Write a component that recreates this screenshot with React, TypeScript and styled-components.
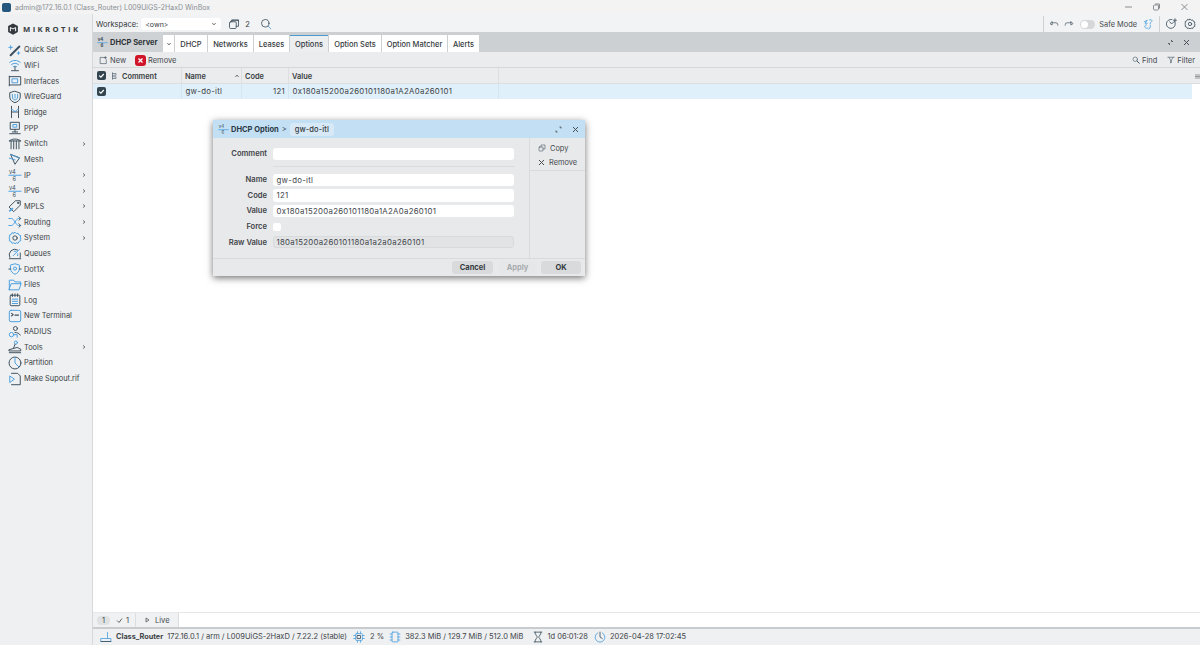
import React from "react";
import styled, { createGlobalStyle } from "styled-components";

const Global = createGlobalStyle`
  html, body { margin: 0; padding: 0; background: #fff; }
  body { font-family: Inter, "Liberation Sans", sans-serif; font-size: 7.5px; color: #33383c; }
  * { box-sizing: border-box; }
`;

const DARK = "#3d4f5c";
const BLUE = "#4a9fe0";

const Page = styled.div`
  width: 1200px;
  height: 645px;
  position: relative;
  overflow: hidden;
  display: flex;
  flex-direction: column;
`;

const TitleBar = styled.div`
  height: 14px;
  flex: none;
  display: flex;
  align-items: center;
  padding-left: 2px;
  gap: 4px;
  background: #f3f3f3;
  color: #8a8f94;
  font-size: 7px;
`;

const AppGlyph = styled.span`
  width: 9px;
  height: 9px;
  border-radius: 2px;
  background: #24567e;
  flex: none;
`;

const TitleText = styled.span`
  flex: 1;
  white-space: nowrap;
`;

const WindowControls = styled.div`
  display: flex;
  align-items: center;
  gap: 21px;
  padding-right: 12px;
`;

const Body = styled.div`
  flex: 1;
  display: flex;
  min-height: 0;
`;

const Sidebar = styled.nav`
  width: 93px;
  flex: none;
  background: #eef0f2;
  border-right: 1px solid #d6d8da;
  padding-top: 6px;
`;

const Logo = styled.div`
  height: 17px;
  display: flex;
  align-items: center;
  gap: 4px;
  padding-left: 7px;
  margin-bottom: 5px;
`;

const LogoText = styled.span`
  font-family: "Open Sans", sans-serif;
  font-weight: 700;
  font-size: 7.7px;
  letter-spacing: 2.4px;
  color: #3a3f44;
`;

const NavItem = styled.div`
  height: 15.67px;
  display: flex;
  align-items: center;
  padding-left: 8px;
  gap: 2px;
  font-size: 7.4px;
  color: #3c4246;
  white-space: nowrap;
`;

const NavLabel = styled.span`
  flex: 1;
`;

const NavArrow = styled.span`
  width: 5px;
  margin-right: 6px;
  display: flex;
`;

const Main = styled.div`
  flex: 1;
  min-width: 0;
  display: flex;
  flex-direction: column;
`;

const TopBar = styled.div`
  height: 18px;
  flex: none;
  display: flex;
  align-items: center;
  background: #f2f3f4;
  padding: 2px 0 0 3px;
  font-size: 7.5px;
`;

const WorkspaceSelect = styled.div`
  width: 80px;
  height: 12px;
  margin-left: 3px;
  background: #fff;
  border-radius: 3px;
  display: flex;
  align-items: center;
  justify-content: space-between;
  padding: 0 4px;
  font-size: 7px;
`;

const TopIcons = styled.div`
  display: flex;
  align-items: center;
  gap: 5px;
  margin-left: 7px;
`;

const SearchSlot = styled.div`
  display: flex;
  margin-left: 10px;
`;

const TopRight = styled.div`
  margin-left: auto;
  height: 16px;
  display: flex;
  align-items: center;
  border-left: 1px solid #cfd1d3;
  padding-left: 5px;
`;

const SafeGroup = styled.div`
  display: flex;
  align-items: center;
  gap: 5px;
  padding-right: 5px;
  border-right: 1px solid #cfd1d3;
  height: 16px;
  font-size: 7.4px;
  color: #44494d;
`;

const Toggle = styled.span`
  width: 15px;
  height: 9px;
  border-radius: 5px;
  background: #d5d7d9;
  display: flex;
  align-items: center;
  padding-left: 1px;
  margin: 0 -1px 0 1px;
  &::before {
    content: "";
    width: 7px;
    height: 7px;
    border-radius: 50%;
    background: #fff;
  }
`;

const GearGroup = styled.div`
  display: flex;
  gap: 6px;
  padding: 0 4px 0 6px;
`;

const TabBar = styled.div`
  height: 20px;
  flex: none;
  display: flex;
  align-items: stretch;
  background: #ccd0d2;
  padding-top: 3px;
`;

const WindowTab = styled.div`
  width: 70px;
  margin-top: -3px;
  display: flex;
  align-items: center;
  gap: 2px;
  padding-left: 4px;
  font-weight: 700;
  font-size: 7.5px;
  background: #ced2d4;
  color: #2e3438;
  white-space: nowrap;
`;

const Tab = styled.div<{ $active?: boolean; $w: number }>`
  width: ${(p) => p.$w}px;
  margin-right: 1px;
  display: flex;
  align-items: center;
  justify-content: center;
  font-size: 7.5px;
  font-weight: 500;
  background: ${(p) => (p.$active ? "#eceef0" : "#fff")};
  color: #353a3e;
  border-top: 1px solid ${(p) => (p.$active ? "#4b9ad0" : "#fff")};
  white-space: nowrap;
`;

const TabActions = styled.div`
  margin-left: auto;
  display: flex;
  align-items: center;
  gap: 9px;
  padding: 0 10px 3px 0;
`;

const Toolbar = styled.div`
  height: 16px;
  flex: none;
  display: flex;
  align-items: center;
  background: #ebecee;
  border-bottom: 1px solid #d5d7d9;
  padding: 1px 0 0 6px;
  gap: 9px;
  font-size: 7.5px;
`;

const ToolButton = styled.span`
  display: flex;
  align-items: center;
  gap: 2px;
  color: #44494d;
`;

const ToolSpacer = styled.div`
  flex: 1;
`;

const ToolRight = styled.div`
  display: flex;
  align-items: center;
  gap: 10px;
  padding-right: 5px;
`;

const COLS = "15px 74px 60px 47px 210px 1fr";

const HeaderRow = styled.div`
  height: 16px;
  flex: none;
  display: grid;
  grid-template-columns: ${COLS};
  background: #ebecee;
  border-bottom: 1px solid #dcdee0;
  font-weight: 600;
  font-size: 7.4px;
  color: #3a3f43;
`;

const HeaderCell = styled.div`
  display: flex;
  align-items: center;
  gap: 3px;
  padding: 1px 0 0 3px;
  border-right: 1px solid #dcdee0;
  justify-content: space-between;
  &:last-child {
    border-right: none;
    justify-content: flex-end;
  }
`;

const CellLabel = styled.span`
  display: flex;
  align-items: center;
  gap: 3px;
  margin-right: auto;
`;

const CheckCell = styled.div`
  display: flex;
  align-items: center;
  justify-content: center;
  padding-left: 1px;
`;

const Check = styled.span`
  width: 9px;
  height: 9px;
  background: #33454f;
  border-radius: 2px;
  display: flex;
`;

const DataRow = styled.div`
  height: 14.5px;
  flex: none;
  width: 1099px;
  display: grid;
  grid-template-columns: ${COLS};
  background: #e0f0fa;
  font-size: 7.8px;
  color: #3d4246;
  letter-spacing: 0.3px;
`;

const DataCell = styled.div<{ $right?: boolean }>`
  display: flex;
  align-items: center;
  padding: 0 3px 0 ${(p) => (p.$right ? 3 : 3.5)}px;
  justify-content: ${(p) => (p.$right ? "flex-end" : "flex-start")};
  border-right: 1px solid #d6e6f0;
  &:last-child {
    border-right: none;
  }
`;

const Content = styled.div`
  flex: 1;
  background: #fff;
`;

const LiveBar = styled.div`
  height: 15px;
  flex: none;
  display: flex;
  align-items: center;
  background: #fff;
  border-top: 1px solid #e6e7e8;
  font-size: 7.5px;
  color: #44494d;
`;

const LiveStats = styled.div`
  height: 100%;
  width: 42px;
  display: flex;
  align-items: center;
  background: #f0f1f2;
  padding-left: 4px;
  gap: 3px;
`;

const CountBadge = styled.span`
  width: 13px;
  height: 9px;
  background: #dfe1e3;
  border-radius: 4px;
  text-align: center;
  line-height: 9px;
  margin-right: 3px;
`;

const LivePlay = styled.div`
  height: 100%;
  display: flex;
  align-items: center;
  gap: 5px;
  background: #f0f1f2;
  border-left: 1px solid #dcdee0;
  border-right: 1px solid #dcdee0;
  padding: 0 8px 0 9px;
`;

const StatusBar = styled.div`
  height: 18px;
  flex: none;
  display: flex;
  align-items: center;
  background: #eef0f2;
  border-top: 2px solid #c9cccf;
  padding: 0 0 1px 7px;
  font-size: 7.5px;
  color: #3f4448;
  white-space: nowrap;
`;

const StatusItem = styled.span<{ $gap?: number; $iconGap?: number }>`
  display: flex;
  align-items: center;
  gap: ${(p) => p.$iconGap ?? 4}px;
  margin-right: ${(p) => p.$gap ?? 6}px;
`;

const RouterName = styled.b`
  font-weight: 700;
  font-size: 7.3px;
`;

const Dialog = styled.div`
  position: absolute;
  left: 213px;
  top: 120px;
  width: 372px;
  height: 156px;
  background: #e8e9eb;
  box-shadow: 0 2px 7px rgba(0, 0, 0, 0.55);
  display: flex;
  flex-direction: column;
`;

const DialogTitle = styled.div`
  height: 18px;
  flex: none;
  background: #c3dff3;
  display: flex;
  align-items: center;
  padding-left: 5px;
  gap: 2px;
  font-size: 7.5px;
`;

const DialogName = styled.b`
  font-weight: 700;
  color: #2b3a46;
`;

const Crumb = styled.span`
  color: #44515c;
  margin: 0 1px;
`;

const Pill = styled.span`
  height: 13px;
  padding: 0 5px;
  background: #d7e9f6;
  border-radius: 3px;
  display: flex;
  align-items: center;
  font-weight: 500;
  letter-spacing: 0.1px;
`;

const DialogClose = styled.div`
  margin-left: auto;
  display: flex;
  gap: 10px;
  padding-right: 6px;
`;

const DialogMain = styled.div`
  flex: 1;
  display: flex;
  min-height: 0;
`;

const Form = styled.div`
  width: 317px;
  flex: none;
  border-right: 1px solid #d8dadc;
  padding-top: 8px;
`;

const FieldRow = styled.div`
  height: 15.6px;
  display: grid;
  grid-template-columns: 54px 241px;
  column-gap: 6px;
  align-items: center;
`;

const FieldLabel = styled.label`
  text-align: right;
  font-weight: 600;
  font-size: 7.6px;
  color: #3f4448;
`;

const Field = styled.div<{ $disabled?: boolean }>`
  height: 12.5px;
  background: ${(p) => (p.$disabled ? "#e2e3e5" : "#fff")};
  border: ${(p) => (p.$disabled ? "1px solid #d8dadc" : "none")};
  border-radius: 3px;
  display: flex;
  align-items: center;
  padding: 0 ${(p) => (p.$disabled ? 2.5 : 3.5)}px;
  font-size: 7.8px;
  letter-spacing: 0.3px;
  color: #40454a;
`;

const CheckBox = styled.span`
  width: 8px;
  height: 8px;
  background: #fff;
  border-radius: 2px;
  display: block;
`;

const Divider = styled.div`
  height: 1px;
  background: #dadcde;
  margin: 4px 14px 5.4px 60px;
`;

const SideActions = styled.div`
  flex: 1;
  height: 33px;
  border-bottom: 1px solid #d8dadc;
  padding: 3px 0 0 8px;
  font-size: 7.4px;
  color: #44494d;
`;

const SideAction = styled.div`
  height: 14px;
  display: flex;
  align-items: center;
  gap: 4px;
`;

const DialogFooter = styled.div`
  height: 18px;
  flex: none;
  border-top: 1px solid #d8dadc;
  display: flex;
  align-items: center;
  justify-content: flex-end;
  padding-right: 4px;
  gap: 5px;
`;

const FootButton = styled.div<{ $w: number; $disabled?: boolean; $gapLeft?: number }>`
  width: ${(p) => p.$w}px;
  height: 13px;
  border-radius: 3px;
  background: ${(p) => (p.$disabled ? "#e6e7e9" : "#d8dadc")};
  color: ${(p) => (p.$disabled ? "#a8abae" : "#33383c")};
  font-weight: 700;
  font-size: 7.5px;
  display: flex;
  align-items: center;
  justify-content: center;
  margin-left: ${(p) => p.$gapLeft ?? 0}px;
`;

type IconProps = { size?: number; children: React.ReactNode };
const Ico = ({ size = 14, children }: IconProps) => (
  <svg
    width={size}
    height={size}
    viewBox="0 0 16 16"
    fill="none"
    stroke={DARK}
    strokeWidth={1.1}
    strokeLinecap="round"
    strokeLinejoin="round"
    style={{ flex: "none" }}
  >
    {children}
  </svg>
);

const Ip = ({ size = 13 }: { size?: number }) => (
  <Ico size={size}>
    <text x="1" y="6.5" fontSize="6.5" fill={DARK} stroke="none" fontFamily="Inter">v4</text>
    <path d="M1 8.3h14" stroke={BLUE} />
    <text x="5" y="15" fontSize="6.5" fill={DARK} stroke="none" fontFamily="Inter">6</text>
  </Ico>
);

const GEAR = "M8 1.5 9.5 3l2-.5 1 2 2 .8-.5 2L15 8l-1 1.2.5 2-2 .8-1 2-2-.5L8 14.5 6.5 13.5l-2 .5-1-2-2-.8.5-2L1 8l1-1.2-.5-2 2-.8 1-2 2 .5z";

const navIcons: Record<string, React.ReactNode> = {
  "Quick Set": (
    <Ico>
      <path d="M3 14 13 4" strokeWidth={2.2} />
      <path d="M3 3v4M1 5h4" stroke={BLUE} />
      <path d="M12 10v3M10.5 11.5h3" stroke={BLUE} />
    </Ico>
  ),
  WiFi: (
    <Ico>
      <path d="M2 5c3.5-3 8.5-3 12 0M4 7.5c2.5-2 5.5-2 8 0M6 10c1.2-.8 2.8-.8 4 0" stroke={BLUE} />
      <path d="M8 10v4M4 14.5h8" />
    </Ico>
  ),
  Interfaces: (
    <Ico>
      <path d="M1.5 2.5v11M1.5 3h13v9.5h-13" />
      <rect x="5" y="5.5" width="6" height="4.5" stroke={BLUE} />
    </Ico>
  ),
  WireGuard: (
    <Ico>
      <path d="M8 1.5 14 3.5V8c0 3.5-3 5.5-6 6.5-3-1-6-3-6-6.5V3.5z" />
      <path d="M5 5v3c0 2 1.500 3 3 3.500 1.500-.5 3-1.500 3-3.500V5M8 5v4" stroke={BLUE} />
    </Ico>
  ),
  Bridge: (
    <Ico>
      <path d="M4 1.5v13M12 1.5v13M4 8h8" />
      <path d="M4 5c2 0 3 1.5 4 3 1-1.5 2-3 4-3" stroke={BLUE} />
    </Ico>
  ),
  PPP: (
    <Ico>
      <rect x="3" y="1.5" width="10" height="8" />
      <path d="M8 9.5v3M2 14.5h12M5 12.5h6" />
      <path d="M6 4h4v3H6z" stroke={BLUE} />
    </Ico>
  ),
  Switch: (
    <Ico>
      <path d="M1.5 4.5c3-3 10-3 13 0M1.5 4.5h13" />
      <path d="M3.5 4.5v9M6.5 4.5v9M9.5 4.5v9M12.5 4.5v9" />
    </Ico>
  ),
  Mesh: (
    <Ico>
      <path d="M3 3 8 14 13 7z" />
      <path d="M3 3 13 7M1.5 7 8 9" stroke={BLUE} />
    </Ico>
  ),
  IP: <Ip size={14} />,
  IPv6: <Ip size={14} />,
  MPLS: (
    <Ico>
      <path d="M9 2h5v5l-7.5 7.5-5-5z" />
      <path d="M2 13.5 5 11" stroke={BLUE} strokeWidth={2} />
      <circle cx="11.5" cy="4.5" r="0.8" />
    </Ico>
  ),
  Routing: (
    <Ico>
      <path d="M1 4h3c3 0 5 8 8 8h2M1 12h3c3 0 5-8 8-8h2" stroke={BLUE} />
      <path d="M12.5 2 14.5 4l-2 2M12.5 10l2 2-2 2" />
    </Ico>
  ),
  System: (
    <Ico>
      <path d={GEAR} stroke={BLUE} />
      <circle cx="8" cy="8" r="2.5" />
    </Ico>
  ),
  Queues: (
    <Ico>
      <path d="M2 13a6.5 6.5 0 0 1 9-8.5" />
      <path d="M1.5 14.5h13M14 8v5" />
      <path d="M6 11 13 4M7 6h2M11 9v2" stroke={BLUE} />
    </Ico>
  ),
  Dot1X: (
    <Ico>
      <path d="M3 3.5 8 2l5 1.5V8c0 3-2.5 5-5 6-2.5-1-5-3-5-6z" stroke={BLUE} />
      <circle cx="8" cy="7.5" r="1.8" stroke={BLUE} />
      <path d="M1 8h2M13 8h2" />
    </Ico>
  ),
  Files: (
    <Ico>
      <path d="M1.5 13.5v-11h5l1.5 2h6.5v2" stroke={BLUE} />
      <path d="M1.5 13.5h11L15 6.5H4z" stroke={BLUE} />
    </Ico>
  ),
  Log: (
    <Ico>
      <rect x="2.5" y="2.5" width="11" height="12" rx="1" />
      <path d="M5 1v3M8 1v3M11 1v3" />
      <path d="M5 7h6M5 9.5h6M5 12h6" stroke={BLUE} />
    </Ico>
  ),
  "New Terminal": (
    <Ico>
      <rect x="1.5" y="1.5" width="13" height="13" rx="2" stroke={BLUE} />
      <path d="M4 5l2 1.5L4 8M8 7h4" strokeWidth={1.2} />
    </Ico>
  ),
  RADIUS: (
    <Ico>
      <circle cx="8.5" cy="4" r="2.3" />
      <path d="M8 8.5c2.5 0 5 1 6 3" />
      <circle cx="4" cy="11" r="2.5" stroke={BLUE} />
      <path d="M6.5 11h4v3" stroke={BLUE} />
    </Ico>
  ),
  Tools: (
    <Ico>
      <circle cx="9" cy="3" r="1.8" stroke={BLUE} />
      <path d="M8 5 6.5 9M1.5 11l9-2.5 4 2v2h-13zM1.5 14.5h13" />
    </Ico>
  ),
  Partition: (
    <Ico>
      <circle cx="8" cy="8" r="6.8" />
      <path d="M8 1.5V8l4.5 4.5" stroke={BLUE} />
    </Ico>
  ),
  "Make Supout.rif": (
    <Ico>
      <path d="M4 1.5h7l3 3v10H4" />
      <path d="M2 5v7l5-3.5z" stroke={BLUE} />
    </Ico>
  ),
};

const navItems: { label: string; arrow?: boolean }[] = [
  { label: "Quick Set" },
  { label: "WiFi" },
  { label: "Interfaces" },
  { label: "WireGuard" },
  { label: "Bridge" },
  { label: "PPP" },
  { label: "Switch", arrow: true },
  { label: "Mesh" },
  { label: "IP", arrow: true },
  { label: "IPv6", arrow: true },
  { label: "MPLS", arrow: true },
  { label: "Routing", arrow: true },
  { label: "System", arrow: true },
  { label: "Queues" },
  { label: "Dot1X" },
  { label: "Files" },
  { label: "Log" },
  { label: "New Terminal" },
  { label: "RADIUS" },
  { label: "Tools", arrow: true },
  { label: "Partition" },
  { label: "Make Supout.rif" },
];

const tabs = [
  { label: "DHCP", w: 32 },
  { label: "Networks", w: 45 },
  { label: "Leases", w: 35 },
  { label: "Options", w: 38, active: true },
  { label: "Option Sets", w: 52 },
  { label: "Option Matcher", w: 65 },
  { label: "Alerts", w: 31 },
];

const Chevron = ({ dir = "down" }: { dir?: "down" | "right" | "up" }) => (
  <svg width="6" height="6" viewBox="0 0 6 6" fill="none" stroke="#555" strokeWidth="1" style={{ flex: "none" }}>
    {dir === "down" && <path d="M1.5 2.2 3 3.8l1.5-1.6" />}
    {dir === "up" && <path d="M1.5 3.8 3 2.2l1.5 1.6" />}
    {dir === "right" && <path d="M2.2 1.5 3.8 3 2.2 4.5" />}
  </svg>
);

const Tick = () => (
  <svg width="9" height="9" viewBox="0 0 9 9" fill="none" stroke="#fff" strokeWidth="1.2">
    <path d="M2.2 4.6 3.9 6.2 6.8 3" />
  </svg>
);

const CloseX = ({ size = 7 }: { size?: number }) => (
  <svg width={size} height={size} viewBox="0 0 7 7" fill="none" stroke="#4a5156" strokeWidth="1" style={{ flex: "none" }}>
    <path d="M1 1l5 5M6 1 1 6" />
  </svg>
);

const Collapse = () => (
  <svg width="7" height="7" viewBox="0 0 7 7" fill="none" stroke="#4a5156" strokeWidth="0.9">
    <path d="M4.5 1v1.5H6M1 4.5h1.5V6" />
  </svg>
);

const ExpandSmall = () => (
  <svg width="7" height="7" viewBox="0 0 7 7" fill="none" stroke="#4a5156" strokeWidth="0.9">
    <path d="M4.5 1H6v1.5M1 4.5V6h1.5" />
  </svg>
);

export default function App() {
  return (
    <Page>
      <Global />
      <TitleBar>
        <AppGlyph />
        <TitleText>admin@172.16.0.1 (Class_Router) L009UiGS-2HaxD WinBox</TitleText>
        <WindowControls>
          <svg width="7" height="8" viewBox="0 0 7 8" stroke="#8a8d90" fill="none"><path d="M0 4h7" /></svg>
          <svg width="7" height="8" viewBox="0 0 7 8" stroke="#8a8d90" fill="none"><rect x=".5" y="2" width="5" height="5" rx="1" /><path d="M2 1h4.5v4.5" /></svg>
          <svg width="7" height="8" viewBox="0 0 7 8" stroke="#8a8d90" fill="none"><path d="M.5 1l6 6M6.5 1l-6 6" /></svg>
        </WindowControls>
      </TitleBar>
      <Body>
        <Sidebar>
          <Logo>
            <svg width="12" height="12" viewBox="0 0 16 16">
              <path d="M8 .5 14.5 4v8L8 15.5 1.5 12V4z" fill="#33393e" />
              <path d="M4.5 11V6L8 8l3.5-2v5" fill="none" stroke="#fff" strokeWidth="1.3" />
            </svg>
            <LogoText>MIKROTIK</LogoText>
          </Logo>
          {navItems.map((item) => (
            <NavItem key={item.label}>
              {navIcons[item.label]}
              <NavLabel>{item.label}</NavLabel>
              {item.arrow && (
                <NavArrow>
                  <Chevron dir="right" />
                </NavArrow>
              )}
            </NavItem>
          ))}
        </Sidebar>
        <Main>
          <TopBar>
            <span>Workspace:</span>
            <WorkspaceSelect>
              <span>&lt;own&gt;</span>
              <Chevron />
            </WorkspaceSelect>
            <TopIcons>
              <Ico size={12}>
                <rect x="2" y="5" width="9" height="9" rx="1.5" />
                <path d="M5 5V2.5h9V11h-3M5 3.5h9" />
              </Ico>
              <span>2</span>
            </TopIcons>
            <SearchSlot>
              <Ico size={12}>
                <circle cx="7" cy="7" r="5" />
                <path d="M11 11l3.5 3.5" stroke={BLUE} />
              </Ico>
            </SearchSlot>
            <TopRight>
              <SafeGroup>
                <Ico size={10}><path d="M5 6h6a3 3 0 0 1 3 3v1M2 7l3-3v5z" /></Ico>
                <Ico size={10}><path d="M11 6H5a3 3 0 0 0-3 3v1M14 7l-3-3v5z" /></Ico>
                <Toggle />
                <span>Safe Mode</span>
                <Ico size={12}>
                  <path d="M3 5l4-2-3 4h3M10 2.5c2-1 4 0 3 2l-2 2V8" stroke={BLUE} />
                  <path d="M6 9c-2 0-3 2-2 3.5s3 1 4 1M11 10v3l-2 1.5" stroke={BLUE} />
                </Ico>
              </SafeGroup>
              <GearGroup>
                <Ico size={12}>
                  <path d="M11.5 4.5A6 6 0 1 1 8 2" />
                  <path d="M5 5l2.5 3 3-3M12 1v4M10 3h4" />
                </Ico>
                <Ico size={12}>
                  <circle cx="8" cy="8" r="2.2" />
                  <path d={GEAR} />
                </Ico>
              </GearGroup>
            </TopRight>
          </TopBar>
          <TabBar>
            <WindowTab>
              <Ip size={11} />
              DHCP Server
            </WindowTab>
            <Tab $w={11}><Chevron /></Tab>
            {tabs.map((t) => (
              <Tab key={t.label} $w={t.w} $active={t.active}>{t.label}</Tab>
            ))}
            <TabActions>
              <Collapse />
              <CloseX />
            </TabActions>
          </TabBar>
          <Toolbar>
            <ToolButton>
              <Ico size={9}><path d="M10 2.5H2v11h11V7M11.5 1v4M9.5 3h4" /></Ico>
              New
            </ToolButton>
            <ToolButton>
              <svg width="11" height="11" viewBox="0 0 11 11" fill="none">
                <rect width="11" height="11" rx="3" fill="#d0142a" />
                <path d="M3.5 3.5l4 4M7.5 3.5l-4 4" stroke="#fff" strokeWidth="1.3" />
              </svg>
              Remove
            </ToolButton>
            <ToolSpacer />
            <ToolRight>
              <ToolButton>
                <Ico size={8}><circle cx="6.5" cy="6.5" r="4.5" /><path d="M10 10l4.500 4.500" strokeWidth={2} /></Ico>
                Find
              </ToolButton>
              <ToolButton>
                <Ico size={8}><path d="M1.5 2.5h13M4 2.5 7 8v6l2-1V8l3-5.5" /></Ico>
                Filter
              </ToolButton>
            </ToolRight>
          </Toolbar>
          <HeaderRow>
            <CheckCell><Check><Tick /></Check></CheckCell>
            <HeaderCell>
              <CellLabel>
                <Ico size={8}><path d="M3 1.5v13M3 3h7v3.5H3M3 9.5h7V13H3" /></Ico>
                Comment
              </CellLabel>
            </HeaderCell>
            <HeaderCell>
              <CellLabel>Name</CellLabel>
              <span style={{ marginRight: 1 }}><Chevron dir="up" /></span>
            </HeaderCell>
            <HeaderCell><CellLabel>Code</CellLabel></HeaderCell>
            <HeaderCell><CellLabel>Value</CellLabel></HeaderCell>
            <HeaderCell>
              <svg width="5" height="5" viewBox="0 0 5 5" stroke="#777" strokeWidth="0.7"><path d="M0 1h5M0 2.5h5M0 4h5" /></svg>
            </HeaderCell>
          </HeaderRow>
          <DataRow>
            <CheckCell><Check><Tick /></Check></CheckCell>
            <DataCell />
            <DataCell>gw-do-itl</DataCell>
            <DataCell $right>121</DataCell>
            <DataCell>0x180a15200a260101180a1A2A0a260101</DataCell>
            <DataCell />
          </DataRow>
          <Content />
          <LiveBar>
            <LiveStats>
              <CountBadge>1</CountBadge>
              <svg width="7" height="7" viewBox="0 0 7 7" fill="none" stroke="#555" strokeWidth="0.9"><path d="M1 3.5l2 2 3-4" /></svg>
              <span>1</span>
            </LiveStats>
            <LivePlay>
              <svg width="5" height="6" viewBox="0 0 5 6" fill="none" stroke="#555" strokeWidth="0.8"><path d="M1 1v4l3-2z" /></svg>
              <span>Live</span>
            </LivePlay>
          </LiveBar>
          <StatusBar>
            <StatusItem $gap={4}>
              <Ico size={12}>
                <path d="M1.5 10h13v4h-13zM10 10V2" stroke={BLUE} />
                <path d="M1.5 14h13" />
              </Ico>
              <RouterName>Class_Router</RouterName>
            </StatusItem>
            <StatusItem $gap={6}>172.16.0.1 / arm / L009UiGS-2HaxD / 7.22.2 (stable)</StatusItem>
            <StatusItem $gap={5} $iconGap={5}>
              <Ico size={12}>
                <rect x="3.5" y="3.5" width="9" height="9" rx="1" stroke={BLUE} />
                <path d="M1 6h2M1 10h2M13 6h2M13 10h2M6 1v2M10 1v2M6 13v2M10 13v2" stroke={BLUE} />
                <rect x="6" y="6" width="4" height="4" />
              </Ico>
              <span>2 %</span>
            </StatusItem>
            <StatusItem $gap={8}>
              <Ico size={12}>
                <rect x="4" y="1.5" width="8" height="13" rx="1" stroke={BLUE} />
                <path d="M1.5 4H4M1.5 8H4M1.5 12H4M12 4h2.5M12 8h2.5M12 12h2.5" stroke={BLUE} />
              </Ico>
              382.3 MiB / 129.7 MiB / 512.0 MiB
            </StatusItem>
            <StatusItem $gap={6}>
              <Ico size={12}>
                <path d="M3 1.5h10M3 14.5h10M4 1.5c0 4 3 5 3 6.5s-3 2.5-3 6.5M12 1.5c0 4-3 5-3 6.5s3 2.5 3 6.5" />
              </Ico>
              1d 06:01:28
            </StatusItem>
            <StatusItem>
              <Ico size={12}>
                <path d="M11 2.5a6.5 6.5 0 1 1-6 0" stroke={BLUE} />
                <path d="M8 1.5V8l3 2" />
              </Ico>
              2026-04-28 17:02:45
            </StatusItem>
          </StatusBar>
        </Main>
      </Body>
      <Dialog>
        <DialogTitle>
          <Ip size={11} />
          <DialogName>DHCP Option</DialogName>
          <Crumb>&gt;</Crumb>
          <Pill>gw-do-itl</Pill>
          <DialogClose>
            <ExpandSmall />
            <CloseX />
          </DialogClose>
        </DialogTitle>
        <DialogMain>
          <Form>
            <FieldRow>
              <FieldLabel>Comment</FieldLabel>
              <Field />
            </FieldRow>
            <Divider />
            <FieldRow>
              <FieldLabel>Name</FieldLabel>
              <Field>gw-do-itl</Field>
            </FieldRow>
            <FieldRow>
              <FieldLabel>Code</FieldLabel>
              <Field>121</Field>
            </FieldRow>
            <FieldRow>
              <FieldLabel>Value</FieldLabel>
              <Field>0x180a15200a260101180a1A2A0a260101</Field>
            </FieldRow>
            <FieldRow>
              <FieldLabel>Force</FieldLabel>
              <CheckBox />
            </FieldRow>
            <FieldRow>
              <FieldLabel>Raw Value</FieldLabel>
              <Field $disabled>180a15200a260101180a1a2a0a260101</Field>
            </FieldRow>
          </Form>
          <SideActions>
            <SideAction>
              <Ico size={8}><rect x="2" y="6" width="8" height="8" rx="1" /><path d="M6 6V2h8v8h-4" /></Ico>
              Copy
            </SideAction>
            <SideAction>
              <CloseX size={7} />
              Remove
            </SideAction>
          </SideActions>
        </DialogMain>
        <DialogFooter>
          <FootButton $w={41}>Cancel</FootButton>
          <FootButton $w={39} $disabled>Apply</FootButton>
          <FootButton $w={40} $gapLeft={-1}>OK</FootButton>
        </DialogFooter>
      </Dialog>
    </Page>
  );
}
